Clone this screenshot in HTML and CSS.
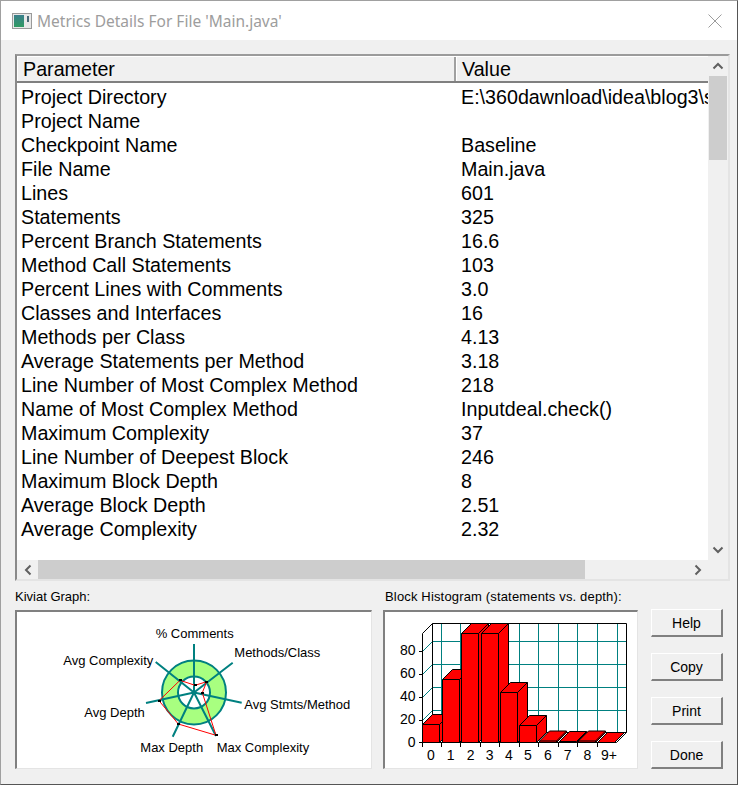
FILE: index.html
```html
<!DOCTYPE html>
<html lang="en">
<head>
  <meta charset="UTF-8">
  <title>Metrics Details For File 'Main.java'</title>
  <link rel="stylesheet" href="styles.css">
</head>
<body>
  <div class="window">
    <header class="titlebar">
      <svg class="app-icon" width="20" height="16" viewBox="0 0 20 16">
        <rect x="0.5" y="0.5" width="19" height="15" fill="#e8e8e8" stroke="#9a9a9a"/>
        <defs>
          <linearGradient id="appfill" x1="0" y1="0" x2="0" y2="1">
            <stop offset="0" stop-color="#3a7f8c"/>
            <stop offset="1" stop-color="#2f9a62"/>
          </linearGradient>
        </defs>
        <rect x="2" y="2" width="10" height="12" fill="url(#appfill)"/>
        <rect x="15" y="3" width="2" height="6" fill="#4a6a78"/>
      </svg>
      <div class="title">Metrics Details For File 'Main.java'</div>
      <svg class="close" width="14" height="14" viewBox="0 0 14 14">
        <path d="M0.5 0.5 L13.5 13.5 M13.5 0.5 L0.5 13.5" stroke="#9c9c9c" stroke-width="1" fill="none"/>
      </svg>
    </header>

    <main class="content">
      <section class="list">
        <div class="list-main">
          <div class="list-head">
            <div class="head-cell head-param">Parameter</div>
            <div class="head-cell head-value">Value</div>
          </div>
          <div class="rows">
            <div class="row"><span class="param">Project Directory</span><span class="value">E:\360dawnload\idea\blog3\src</span></div>
            <div class="row"><span class="param">Project Name</span><span class="value"></span></div>
            <div class="row"><span class="param">Checkpoint Name</span><span class="value">Baseline</span></div>
            <div class="row"><span class="param">File Name</span><span class="value">Main.java</span></div>
            <div class="row"><span class="param">Lines</span><span class="value">601</span></div>
            <div class="row"><span class="param">Statements</span><span class="value">325</span></div>
            <div class="row"><span class="param">Percent Branch Statements</span><span class="value">16.6</span></div>
            <div class="row"><span class="param">Method Call Statements</span><span class="value">103</span></div>
            <div class="row"><span class="param">Percent Lines with Comments</span><span class="value">3.0</span></div>
            <div class="row"><span class="param">Classes and Interfaces</span><span class="value">16</span></div>
            <div class="row"><span class="param">Methods per Class</span><span class="value">4.13</span></div>
            <div class="row"><span class="param">Average Statements per Method</span><span class="value">3.18</span></div>
            <div class="row"><span class="param">Line Number of Most Complex Method</span><span class="value">218</span></div>
            <div class="row"><span class="param">Name of Most Complex Method</span><span class="value">Inputdeal.check()</span></div>
            <div class="row"><span class="param">Maximum Complexity</span><span class="value">37</span></div>
            <div class="row"><span class="param">Line Number of Deepest Block</span><span class="value">246</span></div>
            <div class="row"><span class="param">Maximum Block Depth</span><span class="value">8</span></div>
            <div class="row"><span class="param">Average Block Depth</span><span class="value">2.51</span></div>
            <div class="row"><span class="param">Average Complexity</span><span class="value">2.32</span></div>
          </div>
        </div>

        <div class="vscroll">
          <div class="arrow-btn">
            <svg width="12" height="8" viewBox="0 0 12 8"><path d="M1.5 6.5 L6 2 L10.5 6.5" class="chev"/></svg>
          </div>
          <div class="vthumb"></div>
          <div class="vtrack"></div>
          <div class="arrow-btn">
            <svg width="12" height="8" viewBox="0 0 12 8"><path d="M1.5 1.5 L6 6 L10.5 1.5" class="chev"/></svg>
          </div>
        </div>

        <div class="hscroll">
          <div class="arrow-btn arrow-h">
            <svg width="8" height="12" viewBox="0 0 8 12"><path d="M6.5 1.5 L2 6 L6.5 10.5" class="chev"/></svg>
          </div>
          <div class="hthumb"></div>
          <div class="htrack"></div>
          <div class="arrow-btn arrow-h">
            <svg width="8" height="12" viewBox="0 0 8 12"><path d="M1.5 1.5 L6 6 L1.5 10.5" class="chev"/></svg>
          </div>
        </div>
        <div class="corner"></div>
      </section>

      <section class="bottom">
        <div class="graph graph-kiviat">
          <div class="graph-label">Kiviat Graph:</div>
          <div class="panel">
            <svg class="chart" width="354" height="156" viewBox="0 0 354 156">
              <circle cx="177" cy="80.5" r="32" fill="#a8ff80" stroke="#008080" stroke-width="2"/>
              <circle cx="177" cy="80.5" r="16" fill="#fff" stroke="#008080" stroke-width="2"/>
              <path class="spoke" d="M177 80.5 L177 32 M177 80.5 L215.7 50.7 M177 80.5 L224.7 90.7 M177 80.5 L199 124 M177 80.5 L155.7 124.7 M177 80.5 L129 91 M177 80.5 L138.7 50"/>
              <polygon class="trace" points="178,73.3 189.7,69.7 185.3,80.7 199,123.3 161.3,112 142,88.7 163,68.3"/>
              <g class="dots">
                <rect x="177" y="72" width="3" height="2"/>
                <rect x="188" y="69" width="3" height="2"/>
                <rect x="184" y="80" width="3" height="2"/>
                <rect x="198" y="122" width="3" height="2"/>
                <rect x="160" y="111" width="3" height="2"/>
                <rect x="141" y="88" width="3" height="2"/>
                <rect x="162" y="67" width="3" height="2"/>
              </g>
              <g class="chart-text">
                <text x="138.7" y="25.7">% Comments</text>
                <text x="217.3" y="45">Methods/Class</text>
                <text x="46.3" y="53">Avg Complexity</text>
                <text x="227.3" y="97">Avg Stmts/Method</text>
                <text x="67.3" y="105">Avg Depth</text>
                <text x="123.3" y="139.7">Max Depth</text>
                <text x="199.7" y="139.7">Max Complexity</text>
              </g>
            </svg>
          </div>
        </div>

        <div class="graph graph-hist">
          <div class="graph-label">Block Histogram (statements vs. depth):</div>
          <div class="panel">
            <svg class="chart" width="251" height="156" viewBox="0 0 251 156">
              <!-- grid -->
              <path class="grid" d="M47.5 29.5 H241.5 M47.5 52.5 H241.5 M47.5 75.5 H241.5 M47.5 98.5 H241.5 M56.5 11.5 V120.5 M75.5 11.5 V120.5 M95.5 11.5 V120.5 M114.5 11.5 V120.5 M134.5 11.5 V120.5 M153.5 11.5 V120.5 M173.5 11.5 V120.5 M192.5 11.5 V120.5 M212.5 11.5 V120.5 M232.5 11.5 V120.5 M47.5 29.5 L37.5 39.5 M47.5 52.5 L37.5 62.5 M47.5 75.5 L37.5 85.5 M47.5 98.5 L37.5 108.5"/>
              <path class="frame" d="M47.5 120.5 V11.5 H241.5 V120.5 H47.5 M47.5 11.5 L37.5 21.5 V130.5 H231.5 L241.5 120.5 M47.5 120.5 L37.5 130.5"/>
              <!-- bars -->
              <g class="bars">
                <path d="M37.5 112.5 L47.5 102.5 H64.5 V120.5 L54.5 130.5 H37.5 Z M37.5 112.5 H54.5 V130.5 M54.5 112.5 L64.5 102.5"/>
                <path d="M57.5 67.5 L67.5 57.5 H84.5 V120.5 L74.5 130.5 H57.5 Z M57.5 67.5 H74.5 V130.5 M74.5 67.5 L84.5 57.5"/>
                <path d="M76.5 21.5 L86.5 11.5 H103.5 V120.5 L93.5 130.5 H76.5 Z M76.5 21.5 H93.5 V130.5 M93.5 21.5 L103.5 11.5"/>
                <path d="M96.5 21.5 L106.5 11.5 H123.5 V120.5 L113.5 130.5 H96.5 Z M96.5 21.5 H113.5 V130.5 M113.5 21.5 L123.5 11.5"/>
                <path d="M115.5 80.5 L125.5 70.5 H142.5 V120.5 L132.5 130.5 H115.5 Z M115.5 80.5 H132.5 V130.5 M132.5 80.5 L142.5 70.5"/>
                <path d="M134.5 113.5 L144.5 103.5 H161.5 V120.5 L151.5 130.5 H134.5 Z M134.5 113.5 H151.5 V130.5 M151.5 113.5 L161.5 103.5"/>
                <path d="M154.5 129 L164.5 119 H181.5 V120.5 L171.5 130.5 H154.5 Z M154.5 129 H171.5 V130.5 M171.5 129 L181.5 119"/>
                <path d="M174.5 129.5 L184.5 119.5 H201.5 V120.5 L191.5 130.5 H174.5 Z M174.5 129.5 H191.5 M191.5 129.5 L201.5 119.5"/>
                <path d="M193.5 129 L203.5 119 H220.5 V120.5 L210.5 130.5 H193.5 Z M193.5 129 H210.5 V130.5 M210.5 129 L220.5 119"/>
                <path d="M212.5 130.5 L222.5 120.5 H239.5 L229.5 130.5 Z"/>
              </g>
              <path class="frame" d="M37.5 130.5 V135 M56.5 130.5 V135 M75.5 130.5 V135 M95.5 130.5 V135 M114.5 130.5 V135 M134.5 130.5 V135 M153.5 130.5 V135 M173.5 130.5 V135 M192.5 130.5 V135 M212.5 130.5 V135 M34 130.5 H37.5 M34 108.5 H37.5 M34 85.5 H37.5 M34 62.5 H37.5 M34 39.5 H37.5"/>
              <g class="chart-text axis-y">
                <text x="30.5" y="43">80</text>
                <text x="30.5" y="66">60</text>
                <text x="30.5" y="89">40</text>
                <text x="30.5" y="112">20</text>
                <text x="30.5" y="135">0</text>
              </g>
              <g class="chart-text axis-x">
                <text x="46" y="148">0</text>
                <text x="65.7" y="148">1</text>
                <text x="85.7" y="148">2</text>
                <text x="104.7" y="148">3</text>
                <text x="124" y="148">4</text>
                <text x="143" y="148">5</text>
                <text x="163" y="148">6</text>
                <text x="182.7" y="148">7</text>
                <text x="202.3" y="148">8</text>
                <text x="224" y="148">9+</text>
              </g>
            </svg>
          </div>
        </div>

        <div class="buttons">
          <button class="btn">Help</button>
          <button class="btn">Copy</button>
          <button class="btn">Print</button>
          <button class="btn">Done</button>
        </div>
      </section>
    </main>
  </div>
</body>
</html>
```

FILE: styles.css
```css
* {
  margin: 0;
  padding: 0;
  box-sizing: border-box;
}

body {
  width: 738px;
  height: 785px;
  overflow: hidden;
  background-color: #f0f0f0;
  font-family: "Liberation Sans", Arial, sans-serif;
  color: #000;
}

.window {
  width: 738px;
  height: 785px;
  border: 1px solid #a0a0a0;
  border-right-color: #555;
  border-bottom-color: #555;
  display: flex;
  flex-direction: column;
}

.titlebar {
  height: 39px;
  background-color: #fff;
  display: flex;
  align-items: center;
  padding: 0 15px 0 11px;
  flex-shrink: 0;
}

.app-icon {
  margin-top: 1px;
}

.title {
  flex: 1;
  margin-left: 5px;
  font-family: "Noto Sans", sans-serif;
  font-size: 15.5px;
  color: #9d9d9d;
}

.content {
  flex: 1;
  padding: 14px 7px 0 14px;
}

/* list */
.list {
  width: 715px;
  height: 527px;
  border-style: solid;
  border-width: 2px;
  border-color: #9b9b9b #e4e4e4 #e4e4e4 #8a8a8a;
  background-color: #fff;
  display: grid;
  grid-template-columns: 691px 20px;
  grid-template-rows: 504px 19px;
}

.list-main {
  overflow: hidden;
}

.list-head {
  display: flex;
  height: 27px;
  background-color: #f0f0f0;
  border-top: 1px solid #fff;
  border-bottom: 2px solid #808080;
  font-size: 19.7px;
}

.head-cell {
  line-height: 25px;
  white-space: nowrap;
}

.head-param {
  width: 439px;
  padding-left: 5px;
  border-left: 1px solid #fff;
  border-right: 2px solid #a0a0a0;
}

.head-value {
  flex: 1;
  padding-left: 5px;
  border-left: 1px solid #fff;
}

.rows {
  padding-top: 2px;
  font-size: 19.7px;
}

.row {
  display: flex;
  height: 24px;
  line-height: 24px;
  white-space: nowrap;
}

.param {
  width: 444px;
  padding-left: 4px;
  flex-shrink: 0;
}

/* scrollbars */
.vscroll {
  display: flex;
  flex-direction: column;
  background-color: #f0f0f0;
}

.hscroll {
  display: flex;
  background-color: #f0f0f0;
}

.arrow-btn {
  height: 20px;
  flex-shrink: 0;
  display: flex;
  align-items: center;
  justify-content: center;
}

.arrow-h {
  width: 21px;
  height: 19px;
}

.chev {
  fill: none;
  stroke: #606060;
  stroke-width: 2;
}

.vthumb {
  height: 84px;
  margin: 0 1px;
  background-color: #cdcdcd;
}

.vtrack {
  flex: 1;
}

.hthumb {
  width: 547px;
  background-color: #cdcdcd;
}

.htrack {
  flex: 1;
}

.corner {
  background-color: #f0f0f0;
}

/* bottom row */
.bottom {
  display: flex;
  margin-top: 7px;
}

.graph-label {
  font-size: 13px;
  height: 22px;
  padding-top: 1px;
  line-height: 16px;
}

.graph-kiviat {
  width: 357px;
}

.graph-hist {
  width: 255px;
  margin-left: 11px;
}

.graph-hist .graph-label {
  padding-left: 2px;
  letter-spacing: 0.16px;
}

.panel {
  height: 159px;
  background-color: #fff;
  border-style: solid;
  border-width: 2px 1px 1px 2px;
  border-color: #808080 #e4e4e4 #e4e4e4 #808080;
}

.chart {
  display: block;
}

.chart-text text {
  font-family: "Liberation Sans", Arial, sans-serif;
  font-size: 13px;
  fill: #000;
}

.axis-y text {
  font-size: 14px;
  text-anchor: end;
}

.axis-x text {
  font-size: 14px;
  text-anchor: middle;
}

.spoke {
  stroke: #008080;
  stroke-width: 2;
  fill: none;
}

.trace {
  fill: none;
  stroke: #ff0000;
  stroke-width: 1;
}

.dots rect {
  fill: #000;
}

.grid {
  stroke: #008080;
  stroke-width: 1;
  fill: none;
}

.frame {
  stroke: #000;
  stroke-width: 1;
  fill: none;
}

.bars path {
  fill: #ff0000;
  stroke: #000;
  stroke-width: 1;
}

/* buttons */
.buttons {
  margin-left: 13px;
  padding-top: 21px;
  display: flex;
  flex-direction: column;
  gap: 16px;
}

.btn {
  width: 72px;
  height: 28px;
  background-color: #f0f0f0;
  border-style: solid;
  border-width: 1px 2px 2px 1px;
  border-color: #fff #808080 #808080 #fff;
  font-family: "Liberation Sans", Arial, sans-serif;
  font-size: 14px;
  color: #000;
}
```
